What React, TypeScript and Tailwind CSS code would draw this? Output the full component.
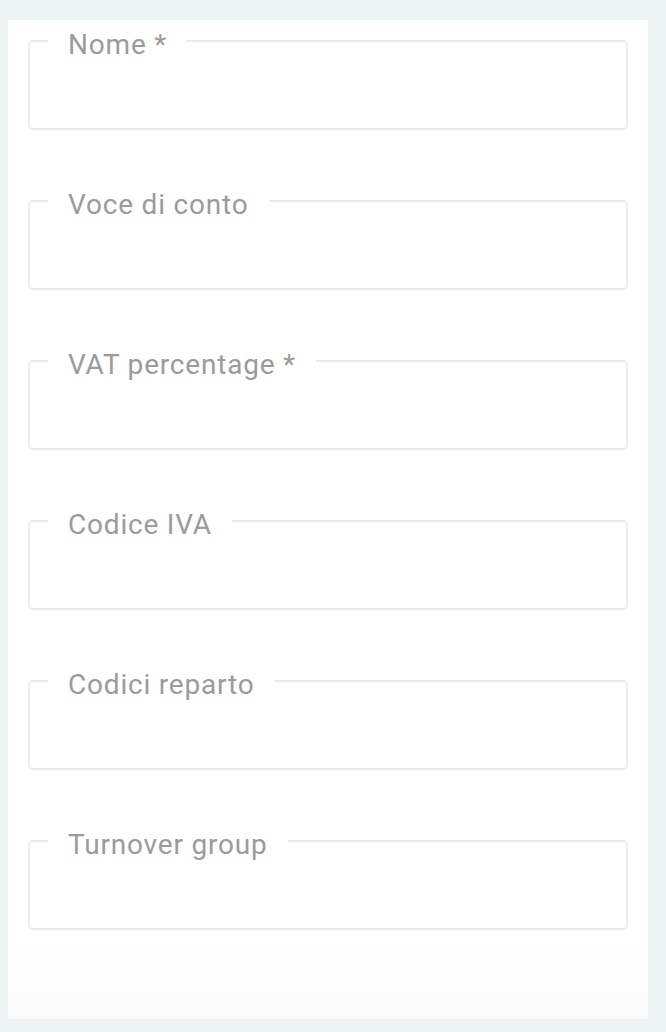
import React from "react";

const fields = [
  "Nome *",
  "Voce di conto",
  "VAT percentage *",
  "Codice IVA",
  "Codici reparto",
  "Turnover group",
];

function Field({ label }: { label: string }) {
  return (
    <fieldset className="m-0 h-[107px] min-w-0 rounded-[5px] border-2 border-[#ebebeb] px-[18px] pb-0 pt-0">
      <legend className="px-[20px] pt-[8px] text-[28px] leading-[28px] tracking-[0.8px] text-[#9b9b9b]">
        {label}
      </legend>
    </fieldset>
  );
}

export default function App() {
  return (
    <div
      className="min-h-[1032px] w-[666px] bg-[#eef4f4] pl-[8px] pt-[20px]"
      style={{ fontFamily: "Roboto, 'Liberation Sans', sans-serif" }}
    >
      <div className="flex h-[999px] w-[640px] flex-col gap-[53px] bg-gradient-to-b from-white from-[92%] to-[#fafafa] px-[20px] pt-[3px] shadow-[0_1px_2px_rgba(0,0,0,0.03)]">
        {fields.map((f) => (
          <Field key={f} label={f} />
        ))}
      </div>
    </div>
  );
}
